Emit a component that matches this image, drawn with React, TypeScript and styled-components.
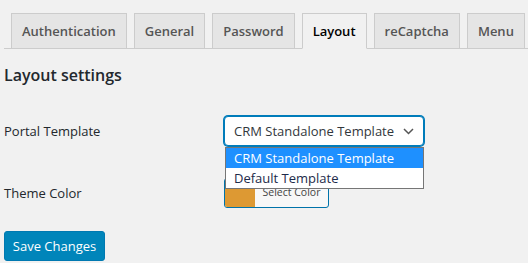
import React from "react";
import styled, { createGlobalStyle } from "styled-components";

const Global = createGlobalStyle`
  html, body { margin: 0; padding: 0; background: #f1f1f1; }
  body { font-family: "Open Sans", "Noto Sans", sans-serif; color: #23282d; }
  * { box-sizing: border-box; }
`;

const Page = styled.div`
  padding: 13px 0 0 4px;
  width: 528px;
  height: 263px;
  overflow: hidden;
`;

const TabBar = styled.div`
  display: flex;
  gap: 7px;
  padding-left: 7px;
  border-bottom: 1px solid #ccc;
  height: 36px;
`;

const Tab = styled.div<{ $active?: boolean }>`
  height: 36px;
  padding: 5px 10px 0;
  border: 1px solid #ccc;
  border-bottom-color: ${(p) => (p.$active ? "#f1f1f1" : "#ccc")};
  background: ${(p) => (p.$active ? "#f1f1f1" : "#e5e5e5")};
  color: ${(p) => (p.$active ? "#000" : "#555")};
  font-size: 13px;
  font-weight: 600;
  line-height: 24px;
  white-space: nowrap;
`;

const Heading = styled.h2`
  margin: 14px 0 0;
  font-size: 16px;
  font-weight: 600;
  line-height: 24px;
  color: #23282d;
`;

const Form = styled.div`
  display: flex;
  flex-direction: column;
  margin-top: 29px;
  gap: 32px;
`;

const Row = styled.div`
  display: flex;
  align-items: center;
  height: 30px;
`;

const Label = styled.div`
  width: 220px;
  font-size: 13px;
  color: #23282d;
`;

const SelectWrap = styled.div`
  position: relative;
  width: 200px;
`;

const SelectBox = styled.div`
  height: 30px;
  width: 200px;
  border: 1px solid #007cba;
  box-shadow: 0 0 0 1px #007cba;
  border-radius: 4px;
  background: #fff;
  display: flex;
  align-items: center;
  justify-content: space-between;
  padding: 0 9px 0 9px;
  font-size: 13px;
  color: #32373c;
  white-space: nowrap;
`;

const Menu = styled.div`
  position: absolute;
  top: 31px;
  left: 1px;
  width: 199px;
  border: 1px solid #767676;
  background: #fff;
  z-index: 2;
`;

const Option = styled.div<{ $selected?: boolean }>`
  height: 20px;
  line-height: 20px;
  padding-left: 8px;
  font-size: 13px;
  white-space: nowrap;
  background: ${(p) => (p.$selected ? "#1e90ff" : "#fff")};
  color: ${(p) => (p.$selected ? "#fff" : "#1d2b4a")};
`;

const ColorButton = styled.div`
  display: flex;
  height: 30px;
  width: 105px;
  border: 1px solid #0073aa;
  border-radius: 3px;
  overflow: hidden;
  background: #f7f7f7;
`;

const Swatch = styled.div<{ $color: string }>`
  width: 30px;
  background: ${(p) => p.$color};
`;

const ColorText = styled.div`
  flex: 1;
  font-size: 10.5px;
  line-height: 26px;
  text-align: center;
  color: #444;
  white-space: nowrap;
`;

const SaveButton = styled.button`
  margin-top: 23px;
  height: 30px;
  width: 101px;
  padding: 0;
  border: 1px solid #0079b1;
  border-radius: 3px;
  background: #0085ba;
  color: #fff;
  font-family: inherit;
  font-size: 13px;
  line-height: 28px;
  white-space: nowrap;
  text-align: center;
  display: block;
`;

const tabs = ["Authentication", "General", "Password", "Layout", "reCaptcha", "Menu"];

export default function App() {
  return (
    <Page>
      <Global />
      <TabBar>
        {tabs.map((t) => (
          <Tab key={t} $active={t === "Layout"}>
            {t}
          </Tab>
        ))}
      </TabBar>
      <Heading>Layout settings</Heading>
      <Form>
        <Row>
          <Label>Portal Template</Label>
          <SelectWrap>
            <SelectBox>
              <span>CRM Standalone Template</span>
              <svg width="11" height="7" viewBox="0 0 11 7" fill="none">
                <path d="M1 1 L5.5 5.5 L10 1" stroke="#555" strokeWidth="1.5" />
              </svg>
            </SelectBox>
            <Menu>
              <Option $selected>CRM Standalone Template</Option>
              <Option>Default Template</Option>
            </Menu>
          </SelectWrap>
        </Row>
        <Row>
          <Label>Theme Color</Label>
          <ColorButton>
            <Swatch $color="#dd9933" />
            <ColorText>Select Color</ColorText>
          </ColorButton>
        </Row>
      </Form>
      <SaveButton>Save Changes</SaveButton>
    </Page>
  );
}
